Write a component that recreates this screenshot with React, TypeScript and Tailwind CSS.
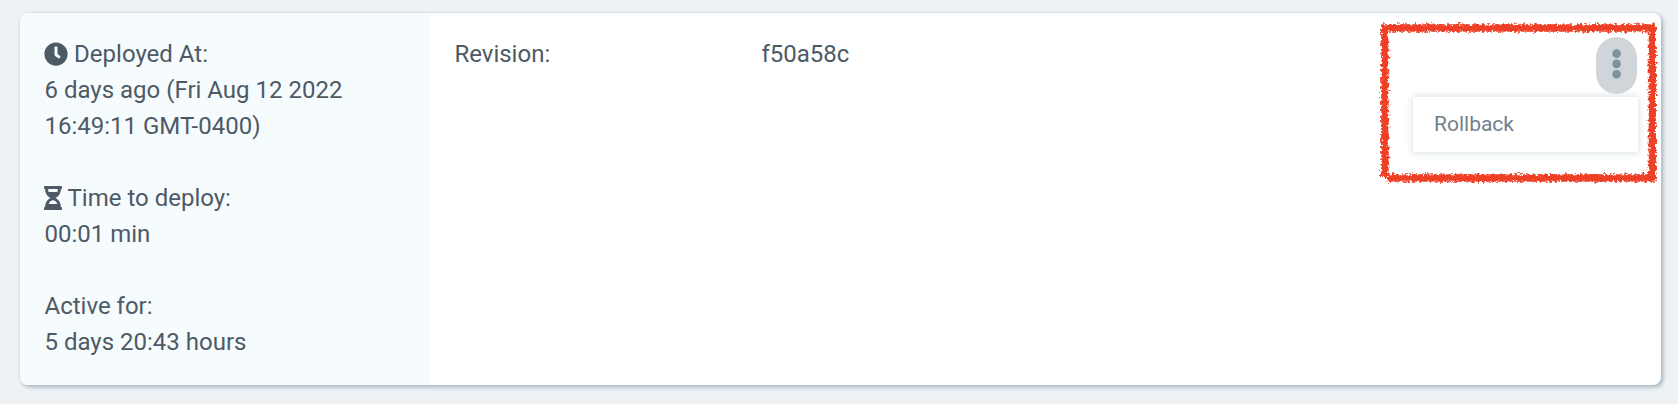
import { FaClock, FaHourglassHalf } from "react-icons/fa";

function Details() {
  return (
    <aside className="w-[410px] shrink-0 rounded-l-lg bg-[#f6fbfe] py-[23px] pl-[24.5px] pr-4">
      <div className="flex items-center">
        <FaClock className="-ml-[0.4px] size-6" />
        <span className="ml-[6px]">Deployed At:</span>
      </div>
      <p className="w-[320px]">6 days ago (Fri Aug 12 2022 16:49:11 GMT-0400)</p>
      <div className="mt-9 flex items-center">
        <FaHourglassHalf className="-ml-[0.5px] h-6 w-[18px]" />
        <span className="ml-[5.5px]">Time to deploy:</span>
      </div>
      <p>00:01 min</p>
      <p className="mt-9">Active for:</p>
      <p>5 days 20:43 hours</p>
    </aside>
  );
}

function Actions() {
  return (
    <div className="ml-auto mr-[23px] flex w-[225px] flex-col items-end pt-6">
      <button
        aria-label="Actions"
        className="mr-px flex h-[57px] w-[41px] items-start justify-center rounded-full bg-[#d0d5da] pt-3"
      >
        <svg className="h-[30px] w-[10px]" viewBox="0 0 10 30" fill="#7a939c">
          <circle cx="4.6" cy="4.6" r="4.3" />
          <circle cx="4.6" cy="14.9" r="4.3" />
          <circle cx="4.6" cy="25.2" r="4.3" />
        </svg>
      </button>
      <div className="mt-[3px] flex h-[55px] w-full items-center bg-white pb-px pl-[21px] text-[21px] leading-8 text-[#72818e] shadow-[0_0_7px_1px_#dbe3e8]">
        Rollback
      </div>
    </div>
  );
}

function Highlight() {
  return (
    <svg
      className="pointer-events-none absolute left-[1355px] top-[4px] h-[172px] w-[286px]"
      viewBox="0 0 286 172"
      fill="none"
    >
      <defs>
        <filter id="chalk" filterUnits="userSpaceOnUse" x="0" y="0" width="286" height="172" colorInterpolationFilters="sRGB">
          <feTurbulence type="fractalNoise" baseFrequency="0.4" numOctaves="2" seed="7" result="noise" />
          <feDisplacementMap in="SourceGraphic" in2="noise" scale="7" xChannelSelector="R" yChannelSelector="G" />
        </filter>
      </defs>
      <g filter="url(#chalk)" stroke="#ee4026" strokeWidth="7.3">
        <path d="M6.5 11H280.5" />
        <path d="M277.3 8V164" />
        <path d="M280.5 161H12.5" />
        <path d="M9.8 160V8" />
      </g>
    </svg>
  );
}

export default function App() {
  return (
    <main className="h-[404px] w-[1678px] bg-[#eef2f4] pl-5 pt-[13px] font-['Roboto',sans-serif] text-2xl leading-9 text-[#4d5a65]">
      <section className="relative flex h-[372px] w-[1641px] rounded-lg bg-white shadow-[0_0_2px_#c3ccd2,2px_2px_4px_#a0b0bb]">
        <Details />
        <div className="flex pl-[24.4px] pt-[23px]">
          <span className="w-[307px]">Revision:</span>
          <span>f50a58c</span>
        </div>
        <Actions />
        <Highlight />
      </section>
    </main>
  );
}
